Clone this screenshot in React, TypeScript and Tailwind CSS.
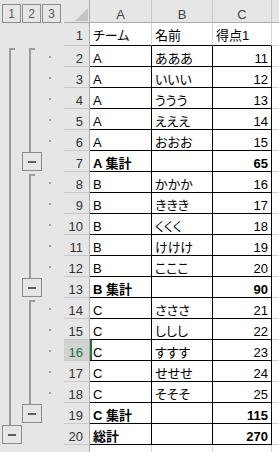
import React from "react";

type Seg = "start" | "line" | "btn" | null;

type Row = {
  n: number;
  a?: string;
  b?: string;
  c?: string;
  bold?: boolean;
  l1: Seg;
  l2: Seg;
  dot?: boolean;
};

const FONT = '"Liberation Sans", "Noto Sans CJK JP", sans-serif';

const names = [
  ["あああ", "いいい", "ううう", "えええ", "おおお"],
  ["かかか", "ききき", "くくく", "けけけ", "こここ"],
  ["さささ", "ししし", "すすす", "せせせ", "そそそ"],
];
const groups = ["A", "B", "C"];

// build the sheet rows (1 = header row of the table)
const buildRows = (): Row[] => {
  const rows: Row[] = [{ n: 1, a: "チーム", b: "名前", c: "得点1", l1: null, l2: null }];
  let n = 2;
  let score = 11;
  groups.forEach((g, gi) => {
    let sum = 0;
    names[gi].forEach((nm, i) => {
      sum += score;
      rows.push({
        n,
        a: g,
        b: nm,
        c: String(score),
        l1: n === 2 ? "start" : "line",
        l2: i === 0 ? "start" : "line",
        dot: true,
      });
      n++;
      score++;
    });
    rows.push({ n, a: `${g} 集計`, c: String(sum), bold: true, l1: "line", l2: "btn" });
    n++;
  });
  rows.push({ n: 20, a: "総計", c: "270", bold: true, l1: "btn", l2: null });
  rows.push({ n: 21, l1: null, l2: null });
  return rows;
};

const OutlineSeg = ({ kind }: { kind: Seg }) => {
  if (kind === "start")
    return (
      <div className="w-[20px] h-full flex flex-col">
        <div className="ml-[8px] mt-[2px] w-[6px] flex-1 border-l-2 border-t-2 border-[#9b9b9b]" />
      </div>
    );
  if (kind === "line")
    return (
      <div className="w-[20px] h-full flex flex-col">
        <div className="ml-[8px] w-[2px] flex-1 bg-[#9b9b9b]" />
      </div>
    );
  if (kind === "btn")
    return (
      <div className="w-[20px] h-full flex flex-col">
        <div className="ml-[8px] w-[2px] h-[1px] bg-[#9b9b9b]" />
        <div className="ml-[1px] w-[20px] h-[19px] border border-[#8c8c8c] flex items-center justify-center">
          <div className="w-[8px] h-[2px] bg-[#5e5e5e]" />
        </div>
      </div>
    );
  return <div className="w-[20px] h-full" />;
};

const Corner = () => (
  <svg width="26" height="22" viewBox="0 0 26 22">
    <polygon points="11,21 24,21 24,8" fill="#c4c4c4" />
  </svg>
);

export default function App() {
  const rows = buildRows();
  return (
    <div
      className="w-[279px] h-[452px] overflow-hidden bg-white text-[13px] text-black"
      style={{ fontFamily: FONT }}
    >
      {/* column header row */}
      <div className="flex h-[23px]">
        <div className="w-[64px] bg-[#e6e6e6] flex gap-[1px] pl-[2px] pt-[4px]">
          {["1", "2", "3"].map((l) => (
            <div
              key={l}
              className="w-[19px] h-[19px] border border-[#8c8c8c] flex items-center justify-center text-[12px] text-[#5a5a5a]"
            >
              {l}
            </div>
          ))}
        </div>
        <div className="w-[26px] bg-[#e6e6e6] border-r border-b border-[#ababab]">
          <Corner />
        </div>
        {[
          ["A", "w-[62px]"],
          ["B", "w-[61px]"],
          ["C", "w-[59px]"],
        ].map(([l, w]) => (
          <div
            key={l}
            className={`${w} bg-[#e6e6e6] border-r border-r-[#c8c8c8] border-b border-b-[#ababab] flex items-end justify-center leading-[14px] text-[#444]`}
          >
            {l}
          </div>
        ))}
        <div className="flex-1 bg-[#e6e6e6] border-b border-[#ababab]" />
      </div>

      {rows.map((r) => {
        const inTable = r.n >= 2 && r.n <= 20;
        const grid = inTable ? "border-r-black" : "border-r-[#d4d4d4]";
        const bottom = r.n <= 20 ? "border-b-black" : "border-b-[#d4d4d4]";
        const h = r.n === 1 ? "h-[23px]" : "h-[21px]";
        const pb = r.n === 1 ? "pb-[2px]" : "";
        const active = r.n === 16;
        return (
          <div key={r.n} className={`flex ${h}`}>
            <div className="w-[64px] bg-[#e6e6e6] flex pl-[1px]">
              <OutlineSeg kind={r.l1} />
              <OutlineSeg kind={r.l2} />
              <div className="w-[22px] h-full flex items-center">
                {r.dot && <div className="ml-[8px] w-[2px] h-[2px] bg-[#a0a0a0]" />}
              </div>
            </div>
            <div
              className={`w-[26px] border-r border-r-[#ababab] border-b border-b-[#c8c8c8] flex items-end justify-end pr-[6px] leading-[14px] ${pb} ${
                active ? "bg-[#d2d2d2] text-[#217346]" : "bg-[#e6e6e6] text-[#333]"
              }`}
            >
              {r.n}
            </div>
            <div
              className={`w-[62px] border-r border-b ${grid} ${bottom} flex items-end pl-[3px] leading-[14px] whitespace-nowrap [font-feature-settings:'palt'] ${pb} ${
                r.bold ? "font-bold" : ""
              } ${active ? "shadow-[inset_2px_0_0_#217346]" : ""}`}
            >
              {r.a}
            </div>
            <div
              className={`w-[61px] border-r border-b ${grid} ${bottom} flex items-end pl-[3px] leading-[14px] whitespace-nowrap [font-feature-settings:'palt'] ${pb}`}
            >
              {r.b}
            </div>
            <div
              className={`w-[59px] border-r border-b ${grid} ${bottom} flex items-end leading-[14px] whitespace-nowrap [font-feature-settings:'palt'] ${pb} ${
                r.n === 1 ? "pl-[3px]" : "justify-end pr-[3px]"
              } ${r.bold ? "font-bold" : ""}`}
            >
              {r.c}
            </div>
            <div className="flex-1 border-b border-[#d4d4d4]" />
          </div>
        );
      })}
    </div>
  );
}
